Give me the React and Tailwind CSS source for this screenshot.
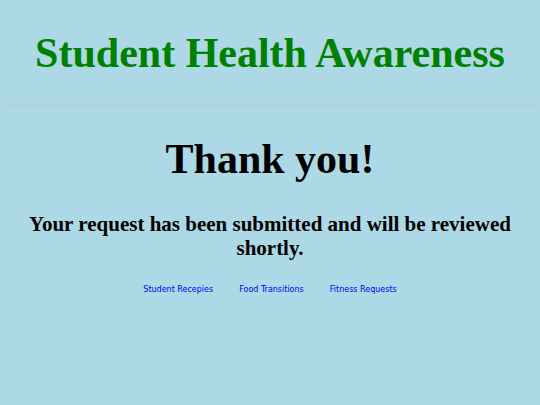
import React from "react";

const links = [
  { label: "Student Recepies", href: "#recipes" },
  { label: "Food Transitions", href: "#food" },
  { label: "Fitness Requests", href: "#fitness" },
];

const Header = () => (
  <header className="border-b border-[#bfc4c4] pb-[27px]">
    <h1 className="text-[42px] leading-[50px] font-bold text-[#008000]">
      Student Health Awareness
    </h1>
  </header>
);

const Footer = () => (
  <nav className="mt-6 flex justify-center gap-[26px] font-['DejaVu_Sans',sans-serif] text-[8px] leading-3">
    {links.map((link) => (
      <a key={link.label} href={link.href} className="text-[#0000ff]">
        {link.label}
      </a>
    ))}
  </nav>
);

const App = () => {
  return (
    <div className="min-h-screen bg-[#add8e6] px-[3px] pt-7 text-center font-['Liberation_Serif',serif] text-black">
      <Header />
      <main className="px-4 pt-7">
        <h1 className="text-[42px] leading-[50px] font-bold">Thank you!</h1>
        <h2 className="mt-7 text-[21px] leading-6 font-bold">
          Your request has been submitted and will be reviewed shortly.
        </h2>
      </main>
      <Footer />
    </div>
  );
};

export default App;
